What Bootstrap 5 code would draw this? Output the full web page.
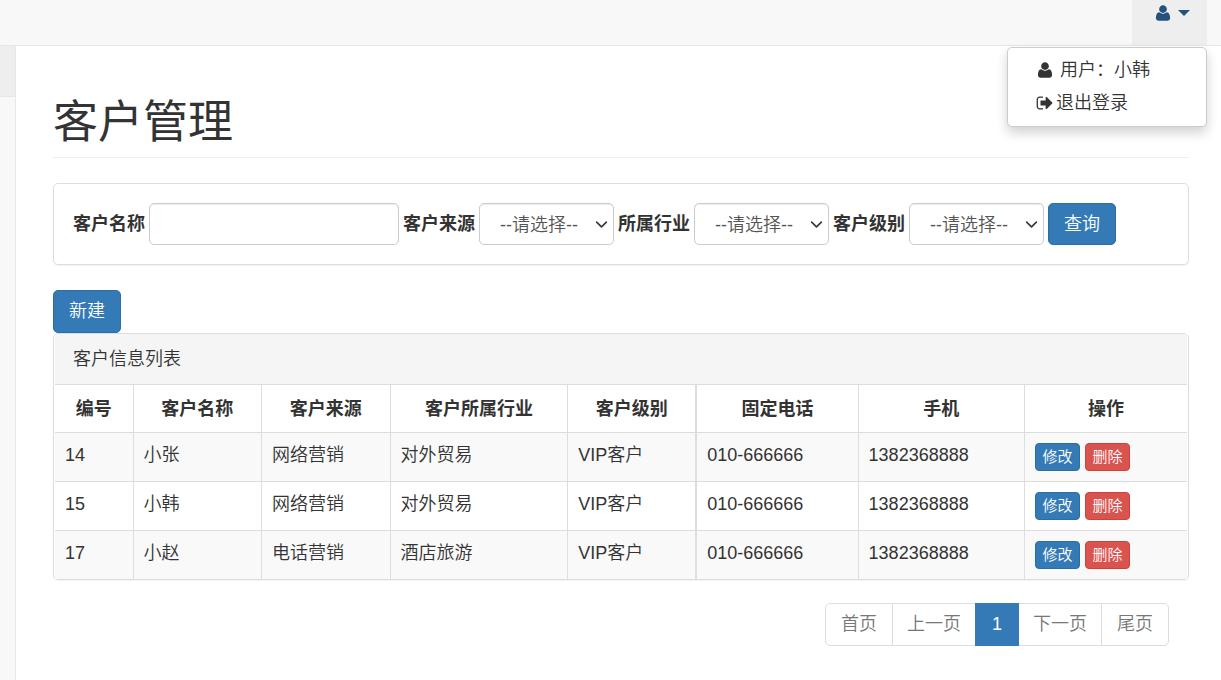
<!DOCTYPE html>
<html lang="zh-CN">
<head>
<meta charset="utf-8">
<meta name="viewport" content="width=device-width, initial-scale=1">
<title>客户管理</title>
<link href="https://cdn.jsdelivr.net/npm/bootstrap@5.3.0/dist/css/bootstrap.min.css" rel="stylesheet">
<style>
  body { font-family: "Liberation Sans", "Noto Sans CJK SC", sans-serif; font-size: 18px; font-weight: 350; line-height: 25px; color: #333; background: #f8f8f8; }
  .fa-icon { width: 18px; height: 18px; fill: currentColor; flex: none; }
  .topbar { height: 46px; background: #f8f8f8; border-bottom: 1px solid #e7e7e7; padding-right: 14px; }
  .user-toggle { width: 75px; height: 45px; border: 0; background: #eee; color: #23527c; padding: 4px 17px 0 22px; }
  .caret-down { border: 6px solid transparent; border-top-color: currentColor; border-bottom: 0; margin-top: 6px; }
  .user-menu { top: 47px; right: 0; width: 200px; padding: 6px 0; border: 1px solid #ccc; border-radius: 5px; box-shadow: 0 6px 12px rgba(0,0,0,.18); font-size: 18px; }
  .user-menu .dropdown-item { color: #333; padding: 4px 28px; line-height: 25px; font-weight: 350; gap: 2px; }
  .user-menu .fa-icon { margin-bottom: 2px; }
  .user-menu li:first-child .dropdown-item { gap: 6px; }
  .side-strip { width: 16px; border-right: 1px solid #e7e7e7; flex: none; }
  .side-active { height: 51px; background: #eee; border-bottom: 1px solid #e7e7e7; }
  .page-area { padding: 50px 32px 34px 37px; min-width: 0; }
  .page-title { font-size: 45px; line-height: 50px; font-weight: 400; padding: 2px 0 9px; margin-bottom: 25px; border-bottom: 1px solid #eee; }
  .panel-box { border: 1px solid #ddd; border-radius: 5px; box-shadow: 0 1px 1px rgba(0,0,0,.05); }
  .search-form { padding: 19px; margin-bottom: 25px; gap: 4px; }
  .search-form label { font-weight: 700; white-space: nowrap; }
  .search-form .form-control, .search-form .form-select { height: 42px; border: 1px solid #ccc; border-radius: 5px; box-shadow: inset 0 1px 1px rgba(0,0,0,.075); font-size: 18px; font-weight: 350; line-height: 25px; color: #555; }
  .search-form .form-control { width: 250px; }
  .search-form .form-select { width: 135px; padding: 8px 20px 6px; background-size: 13px 13px; background-position: right 5px center; }
  .btn { font-weight: 350; }
  .btn-primary { --bs-btn-bg: #337ab7; --bs-btn-border-color: #2e6da4; --bs-btn-hover-bg: #286090; }
  .btn-danger { --bs-btn-bg: #d9534f; --bs-btn-border-color: #d43f3a; --bs-btn-hover-bg: #c9302c; }
  .btn-main { font-size: 18px; line-height: 25px; padding: 8px 15px; border-radius: 5px; }
  .search-form .btn-main { padding: 8px 15px 7px; }
  .btn-row { font-size: 15px; line-height: 22px; min-width: 45px; padding: 2px 6px; border-radius: 4px; }
  .row-actions { gap: 5px; }
  .list-head { background: #f5f5f5; border-bottom: 1px solid #ddd; padding: 13px 18px 12px; }
  .list-panel { padding: 0 1px; }
  .customer-table { table-layout: fixed; --bs-table-color: #333; --bs-table-striped-color: #333; --bs-table-striped-bg: #f9f9f9; color: #333; border-color: #ddd; }
  .customer-table > * > tr > * { padding: 10px; border: 0 solid #ddd; border-right-width: 1px; border-bottom-width: 1px; vertical-align: top; }
  .customer-table > * > tr > :last-child { border-right-width: 0; }
  .customer-table > * > tr > :nth-child(5) { border-right-width: 2px; }
  .customer-table > tbody > tr:last-child > * { border-bottom-width: 0; }
  .customer-table > thead > tr > th { padding: 12px 10px 10px; text-align: center; }
  .w-id { width: 6.9%; } .w-mid { width: 11.35%; } .w-trade { width: 15.7%; } .w-tel { width: 14.3%; } .w-cell { width: 14.7%; }
  .pager { margin: 23px 20px 0 0; }
  .pager .page-link { font-size: 18px; line-height: 25px; padding: 8px 14px; color: #777; border-color: #ddd; }
  .pager .page-item.active .page-link { background: #337ab7; border-color: #337ab7; color: #fff; padding: 8px 16px; }
  .pager .page-item:first-child .page-link { border-radius: 5px 0 0 5px; padding: 8px 15px; }
  .pager .page-item:last-child .page-link { border-radius: 0 5px 5px 0; padding: 8px 15px; }
</style>
</head>
<body class="d-flex flex-column min-vh-100">
<svg class="d-none" aria-hidden="true">
  <symbol id="icon-user" viewBox="0 0 1792 1792"><path d="M1600 1405q0 120-73 189.5t-194 69.5h-874q-121 0-194-69.5t-73-189.5q0-53 3.5-103.5t14-109 26.5-108.5 43-97.5 62-81 85.5-53.5 111.5-20q9 0 42 21.5t74.5 48 108 48 133.5 21.5 133.5-21.5 108-48 74.5-48 42-21.5q61 0 111.5 20t85.5 53.5 62 81 43 97.5 26.5 108.5 14 109 3.5 103.5zm-320-893q0 159-112.5 271.5t-271.5 112.5-271.5-112.5-112.5-271.5 112.5-271.5 271.5-112.5 271.5 112.5 112.5 271.5z"/></symbol>
  <symbol id="icon-signout" viewBox="0 0 1792 1792"><path d="M704 1440q0 4 1 20t.5 26.5-3 23.5-10 19.5-20.5 6.5h-320q-119 0-203.5-84.5t-84.5-203.5v-704q0-119 84.5-203.5t203.5-84.5h320q13 0 22.5 9.5t9.5 22.5q0 4 1 20t.5 26.5-3 23.5-10 19.5-20.5 6.5h-320q-66 0-113 47t-47 113v704q0 66 47 113t113 47h312l11.5 1 11.5 3 8 5.5 7 9 2 13.5zm928-544q0 26-19 45l-544 544q-19 19-45 19t-45-19-19-45v-288h-448q-26 0-45-19t-19-45v-384q0-26 19-45t45-19h448v-288q0-26 19-45t45-19 45 19l544 544q19 19 19 45z"/></symbol>
</svg>

<header class="topbar d-flex justify-content-end">
  <div class="dropdown">
    <button type="button" class="user-toggle d-flex align-items-start justify-content-between" data-bs-toggle="dropdown" data-bs-display="static" aria-expanded="true" aria-label="用户菜单">
      <svg class="fa-icon"><use href="#icon-user"/></svg>
      <span class="caret-down"></span>
    </button>
    <ul class="dropdown-menu user-menu show">
      <li><a class="dropdown-item d-flex align-items-center" href="#"><svg class="fa-icon"><use href="#icon-user"/></svg>用户：小韩</a></li>
      <li><a class="dropdown-item d-flex align-items-center" href="#"><svg class="fa-icon"><use href="#icon-signout"/></svg>退出登录</a></li>
    </ul>
  </div>
</header>

<div class="d-flex flex-grow-1">
  <aside class="side-strip"><div class="side-active"></div></aside>
  <main class="page-area flex-grow-1 bg-white">
    <h1 class="page-title">客户管理</h1>

    <form class="panel-box search-form d-flex flex-wrap align-items-center">
      <label for="custName">客户名称</label>
      <input type="text" class="form-control" id="custName">
      <label for="custSource">客户来源</label>
      <select class="form-select" id="custSource"><option>--请选择--</option></select>
      <label for="custIndustry">所属行业</label>
      <select class="form-select" id="custIndustry"><option>--请选择--</option></select>
      <label for="custLevel">客户级别</label>
      <select class="form-select" id="custLevel"><option>--请选择--</option></select>
      <button type="submit" class="btn btn-primary btn-main">查询</button>
    </form>

    <button type="button" class="btn btn-primary btn-main d-block">新建</button>
    <section class="panel-box list-panel">
      <div class="list-head">客户信息列表</div>
      <table class="table table-striped customer-table mb-0">
        <colgroup><col class="w-id"><col class="w-mid"><col class="w-mid"><col class="w-trade"><col class="w-mid"><col class="w-tel"><col class="w-cell"><col></colgroup>
        <thead><tr><th>编号</th><th>客户名称</th><th>客户来源</th><th>客户所属行业</th><th>客户级别</th><th>固定电话</th><th>手机</th><th>操作</th></tr></thead>
        <tbody>
          <tr><td>14</td><td>小张</td><td>网络营销</td><td>对外贸易</td><td>VIP客户</td><td>010-666666</td><td>1382368888</td>
            <td><div class="d-flex row-actions"><button type="button" class="btn btn-primary btn-row">修改</button><button type="button" class="btn btn-danger btn-row">删除</button></div></td></tr>
          <tr><td>15</td><td>小韩</td><td>网络营销</td><td>对外贸易</td><td>VIP客户</td><td>010-666666</td><td>1382368888</td>
            <td><div class="d-flex row-actions"><button type="button" class="btn btn-primary btn-row">修改</button><button type="button" class="btn btn-danger btn-row">删除</button></div></td></tr>
          <tr><td>17</td><td>小赵</td><td>电话营销</td><td>酒店旅游</td><td>VIP客户</td><td>010-666666</td><td>1382368888</td>
            <td><div class="d-flex row-actions"><button type="button" class="btn btn-primary btn-row">修改</button><button type="button" class="btn btn-danger btn-row">删除</button></div></td></tr>
        </tbody>
      </table>
    </section>

    <nav class="pager" aria-label="分页">
      <ul class="pagination justify-content-end mb-0">
        <li class="page-item"><a class="page-link" href="#">首页</a></li>
        <li class="page-item"><a class="page-link" href="#">上一页</a></li>
        <li class="page-item active"><a class="page-link" href="#" aria-current="page">1</a></li>
        <li class="page-item"><a class="page-link" href="#">下一页</a></li>
        <li class="page-item"><a class="page-link" href="#">尾页</a></li>
      </ul>
    </nav>
  </main>
</div>
<script src="https://cdn.jsdelivr.net/npm/bootstrap@5.3.0/dist/js/bootstrap.bundle.min.js"></script>
</body>
</html>
